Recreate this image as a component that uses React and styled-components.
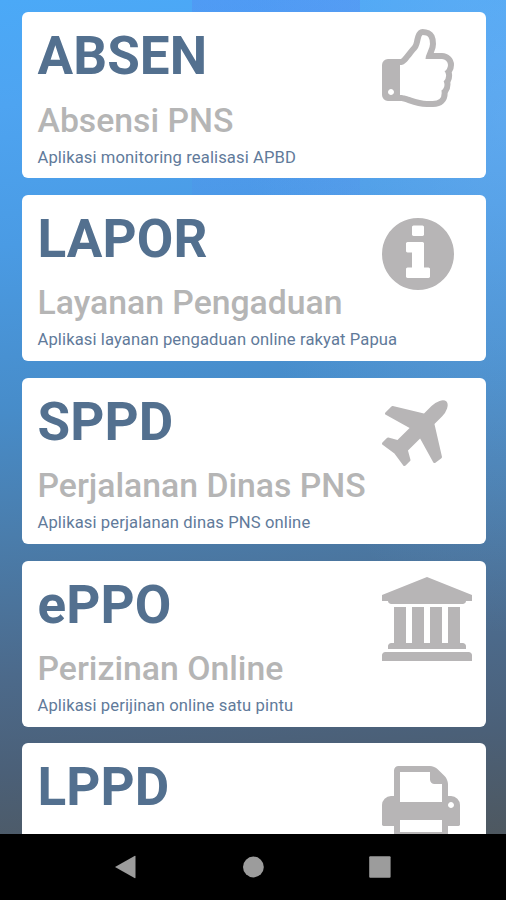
import React from "react";
import styled, { createGlobalStyle } from "styled-components";

const GlobalStyle = createGlobalStyle`
  * { box-sizing: border-box; }
  body { margin: 0; font-family: Roboto, sans-serif; }
`;

const Screen = styled.div`
  display: flex;
  flex-direction: column;
  width: 506px;
  height: 900px;
  overflow: hidden;
  background: #000;
`;

const Content = styled.main`
  flex: 1;
  min-height: 0;
  overflow: hidden;
  display: flex;
  flex-direction: column;
  gap: 16.75px;
  padding: 12.4px 20.5px 0 22px;
  background:
    linear-gradient(180deg, rgba(88, 125, 240, 0.3), rgba(88, 125, 240, 0.13) 55%, rgba(88, 125, 240, 0)) 192px 0 / 168px 340px no-repeat,
    radial-gradient(ellipse 260px 520px at 100% 14%, rgba(130, 185, 245, 0.32), rgba(130, 185, 245, 0)),
    linear-gradient(175deg, #4ba9f7 0%, #4ea4f1 12%, #4a9be4 28%, #478cc9 47%, #4a7dac 61%, #4c6a8b 77%, #4b6078 88%, #4e5860 100%);
`;

const Card = styled.article`
  flex: none;
  display: flex;
  justify-content: space-between;
  height: 166px;
  padding: 0 0 0 15.5px;
  border-radius: 6px;
  background: #fff;
`;

const CardText = styled.div`
  width: 344.5px;
  flex: none;
  white-space: nowrap;
`;

const Title = styled.h2`
  margin: 13px 0 0;
  font-size: 53px;
  line-height: 62px;
  font-weight: 700;
  color: #53708f;
  letter-spacing: 0.1px;
`;

const Subtitle = styled.h3`
  margin: 13.3px 0 0;
  font-size: 33.75px;
  line-height: 40px;
  font-weight: 500;
  color: #b5b5b5;
`;

const Description = styled.p`
  margin: 7px 0 0;
  font-size: 16.6px;
  line-height: 20px;
  color: #617a9a;
  letter-spacing: 0.11px;
`;

const IconBox = styled.div`
  flex: 1;
  padding-top: 16.6px;
`;

const Glyph = styled.svg`
  display: block;
  height: 84px;
  width: ${(p) => (p.$units * 84) / 1792}px;
  fill: #b7b5b6;
`;

const NavBar = styled.nav`
  flex: none;
  display: grid;
  grid-template-columns: repeat(3, 127px);
  justify-content: center;
  align-items: center;
  justify-items: center;
  height: 66.5px;
  background: #000;
`;

const NavIcon = styled.svg`
  display: block;
  width: 24px;
  height: 24px;
  fill: #9c9c9c;
`;

const ICONS = {
  thumb: {
    x: 128,
    w: 1536,
    d: "M384 1344q0-26-19-45t-45-19-45 19-19 45 19 45 45 19 45-19 19-45zm1152-576q0-51-39-89.5t-89-38.5h-352q0-58 48-159.5t48-160.5q0-98-32-145t-128-47q-26 26-38 85t-30.5 125.5-59.5 109.5q-22 23-77 91-4 5-23 30t-31.5 41-34.5 42.5-40 44-38.5 35.5-40 27-35.5 9h-32v640h32q13 0 31.5 3t33 6.5 38 11 35 11.5 35.5 12.5 29 10.5q211 73 342 73h121q192 0 192-167 0-26-5-56 30-16 47.5-52.5t17.5-73.5-18-69q53-50 53-119 0-25-10-55.5t-25-47.5q32-1 53.5-47t21.5-81zm128-1q0 89-49 163 9 33 9 69 0 77-38 144 3 21 3 43 0 101-60 178 1 139-85 219.5t-227 80.5h-129q-96 0-189.5-22.5t-216.5-65.5q-116-40-138-40h-288q-53 0-90.5-37.5t-37.5-90.5v-640q0-53 37.5-90.5t90.5-37.5h274q36-24 137-155 58-75 107-128 24-25 35.5-85.5t30.5-126.5 62-108q39-37 90-37 84 0 151 32.5t102 101.5 35 186q0 93-48 192h176q104 0 180 76t76 179z",
  },
  info: {
    x: 128,
    w: 1536,
    d: "M1152 1376v-160q0-14-9-23t-23-9h-96v-512q0-14-9-23t-23-9h-320q-14 0-23 9t-9 23v160q0 14 9 23t23 9h96v320h-96q-14 0-23 9t-9 23v160q0 14 9 23t23 9h448q14 0 23-9t9-23zm-128-896v-160q0-14-9-23t-23-9h-192q-14 0-23 9t-9 23v160q0 14 9 23t23 9h192q14 0 23-9t9-23zm640 416q0 209-103 385.5t-279.5 279.5-385.5 103-385.5-103-279.5-279.5-103-385.5 103-385.5 279.5-279.5 385.5-103 385.5 103 279.5 279.5 103 385.5z",
  },
  plane: {
    x: 192,
    w: 1408,
    d: "M1568 160q44 52 12 148t-108 172l-161 161 160 696q5 19-12 33l-128 96q-7 6-19 6-4 0-7-1-15-3-21-16l-279-508-259 259 53 194q5 17-8 31l-96 96q-9 9-23 9h-2q-15-2-24-13l-189-252-252-189q-11-7-13-23-1-13 9-25l96-97q9-9 23-9 6 0 8 1l194 53 259-259-508-279q-14-8-17-24-2-16 9-27l128-128q14-13 30-8l665 159 160-160q76-76 172-108t148 12z",
  },
  bank: {
    x: 0,
    w: 1920,
    d: "M960 0l960 384v128h-128q0 26-20.5 45t-48.5 19H197q-28 0-48.5-19t-20.5-45H0V384zM256 640h256v768h128V640h256v768h128V640h256v768h128V640h256v768h59q28 0 48.5 19t20.5 45v64H128v-64q0-26 20.5-45t48.5-19h59zM1851 1600q28 0 48.5 19t20.5 45v128H0v-128q0-26 20.5-45t48.5-19z",
  },
  printer: {
    x: 64,
    w: 1664,
    d: "M448 1536h896v-256h-896v256zm0-640h896v-384h-160q-40 0-68-28t-28-68v-160h-640v640zm1152 64q0-26-19-45t-45-19-45 19-19 45 19 45 45 19 45-19 19-45zm128 0v416q0 13-9.5 22.5t-22.5 9.5h-224v160q0 40-28 68t-68 28h-960q-40 0-68-28t-28-68v-160h-224q-13 0-22.5-9.5t-9.5-22.5v-416q0-79 56.5-135.5t135.5-56.5h64v-544q0-40 28-68t68-28h672q40 0 88 20t76 48l152 152q28 28 48 76t20 88v256h64q79 0 135.5 56.5t56.5 135.5z",
  },
};

const SERVICES = [
  { title: "ABSEN", subtitle: "Absensi PNS", text: "Aplikasi monitoring realisasi APBD", icon: "thumb" },
  { title: "LAPOR", subtitle: "Layanan Pengaduan", text: "Aplikasi layanan pengaduan online rakyat Papua", icon: "info" },
  { title: "SPPD", subtitle: "Perjalanan Dinas PNS", text: "Aplikasi perjalanan dinas PNS online", icon: "plane" },
  { title: "ePPO", subtitle: "Perizinan Online", text: "Aplikasi perijinan online satu pintu", icon: "bank" },
  { title: "LPPD", icon: "printer" },
];

function ServiceCard({ service }) {
  const icon = ICONS[service.icon];
  return (
    <Card>
      <CardText>
        <Title>{service.title}</Title>
        {service.subtitle && <Subtitle>{service.subtitle}</Subtitle>}
        {service.text && <Description>{service.text}</Description>}
      </CardText>
      <IconBox>
        <Glyph $units={icon.w} viewBox={`${icon.x} 0 ${icon.w} 1792`} aria-hidden="true">
          <path d={icon.d} />
        </Glyph>
      </IconBox>
    </Card>
  );
}

export default function App() {
  return (
    <Screen>
      <GlobalStyle />
      <Content>
        {SERVICES.map((s) => (
          <ServiceCard key={s.title} service={s} />
        ))}
      </Content>
      <NavBar>
        <NavIcon viewBox="0 0 24 24"><path d="M1 12L20.5 1Q21.5.5 21.5 1.5V22.5Q21.5 23.5 20.5 23Z" /></NavIcon>
        <NavIcon viewBox="0 0 24 24"><circle cx="12.4" cy="12" r="10.4" /></NavIcon>
        <NavIcon viewBox="0 0 24 24"><rect x="1.2" y="1.2" width="21.4" height="21.6" rx="1" /></NavIcon>
      </NavBar>
    </Screen>
  );
}
